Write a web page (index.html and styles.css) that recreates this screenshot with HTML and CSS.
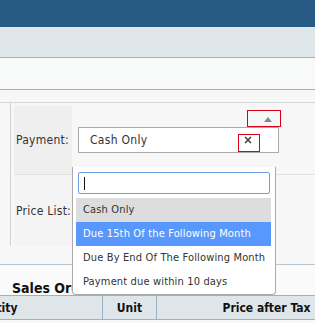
FILE: index.html
```html
<!DOCTYPE html>
<html lang="en">
<head>
    <meta charset="UTF-8">
    <title>Sales Order</title>
    <link rel="stylesheet" href="styles.css">
</head>
<body>
    <div class="topbar"></div>
    <div class="subbar"></div>
    <div class="toolbar"></div>
    <div class="gap"></div>

    <div class="form">
        <div class="form-row row-payment">
            <div class="label">Payment:</div>
            <div class="field">
                <div class="select">
                    <span class="select-text">Cash Only</span>
                    <span class="select-clear">
                        <svg width="8" height="8" viewBox="0 0 8 8">
                            <path d="M1 1 L7 7 M7 1 L1 7" stroke="#444" stroke-width="1.6" fill="none"/>
                        </svg>
                    </span>
                </div>
            </div>
        </div>
        <div class="form-row row-price">
            <div class="label">Price List:</div>
            <div class="field"></div>
        </div>
    </div>

    <div class="lines">
        <h2><span>Sales Order Lines</span></h2>
        <div class="table-wrap">
            <table>
                <thead>
                    <tr>
                        <th class="col-qty">Quantity</th>
                        <th class="col-unit">Unit</th>
                        <th class="col-price">Price after Tax</th>
                    </tr>
                </thead>
            </table>
        </div>
    </div>

    <!-- annotation boxes -->
    <div class="mark mark-arrow"><span class="arrow-up"></span></div>
    <div class="mark mark-clear"></div>

    <!-- open dropdown -->
    <div class="dropdown">
        <div class="search"><span class="caret"></span></div>
        <ul class="options">
            <li class="selected">Cash Only</li>
            <li class="active">Due 15th Of the Following Month</li>
            <li>Due By End Of The Following Month</li>
            <li>Payment due within 10 days</li>
        </ul>
    </div>
</body>
</html>
```

FILE: styles.css
```css
body {
    margin: 0;
    background: #f7f7f7;
    font-family: 'DejaVu Sans Condensed', 'DejaVu Sans', sans-serif;
    color: #333;
    overflow: hidden;
}

.topbar {
    height: 27px;
    background: #285a86;
}

.subbar {
    height: 30px;
    background: #dfe6ea;
    border-bottom: 1px solid #9fb0bf;
}

.toolbar {
    height: 31px;
    background: #f8f9f9;
    border-bottom: 1px solid #a3b2bf;
}

.gap {
    height: 12px;
    border-bottom: 1px solid #d6d6d6;
}

.form {
    margin-left: 10px;
    border-left: 1px solid #d2d2d2;
    padding: 3px 0 0 3px;
    height: 140px;
}

.form-row {
    display: flex;
}

.row-payment {
    height: 68px;
    border-bottom: 1px solid #e2e2e2;
}

.row-price {
    height: 71px;
}

.label {
    width: 58px;
    flex-shrink: 0;
    display: flex;
    align-items: center;
    padding-left: 2px;
    box-sizing: border-box;
    font-size: 12px;
    letter-spacing: 0.25px;
    white-space: nowrap;
    background: #efefef;
}

.row-price .label {
    background: #f4f4f4;
}

.field {
    flex: 1;
    display: flex;
    align-items: center;
    padding-left: 6px;
}

.select {
    width: 201px;
    height: 26px;
    box-sizing: border-box;
    border: 1px solid #aaa;
    background: #fff;
    display: flex;
    align-items: center;
    padding-left: 11px;
    font-size: 12px;
}

.select-text {
    flex: 1;
    letter-spacing: 0.3px;
}

.select-clear {
    width: 22px;
    height: 16px;
    margin-right: 19px;
    display: flex;
    align-items: center;
    justify-content: center;
}

.lines {
    border-top: 1px solid #b9c5ce;
    margin-top: 18px;
    background: #fafafa;
}

.lines h2 {
    margin: 0;
    height: 30px;
    width: 72px;
    overflow: hidden;
    white-space: nowrap;
    box-sizing: border-box;
    padding: 16px 0 0 12px;
    font-size: 14px;
    line-height: 14px;
    font-weight: bold;
    color: #111;
}

.table-wrap {
    overflow: hidden;
}

table {
    border-collapse: collapse;
    margin-left: -120px;
}

thead th {
    background: #dfe6ea;
    border-top: 1px solid #9cb2c4;
    border-bottom: 1px solid #9cb2c4;
    border-right: 1px solid #9cb2c4;
    height: 23px;
    padding: 0;
    font-size: 12px;
    font-weight: bold;
    color: #111;
}

.col-qty {
    width: 222px;
}

.col-unit {
    width: 53px;
}

.col-price {
    width: 158px;
    text-align: right;
    padding-right: 4px;
    box-sizing: border-box;
    border-right: none;
}

.mark {
    position: absolute;
    border: 1px solid #d9001b;
    box-sizing: border-box;
}

.mark-arrow {
    left: 247px;
    top: 110px;
    width: 34px;
    height: 17px;
}

.arrow-up {
    position: absolute;
    left: 16px;
    top: 6px;
    border-left: 4px solid transparent;
    border-right: 4px solid transparent;
    border-bottom: 5px solid #888;
}

.mark-clear {
    left: 238px;
    top: 134px;
    width: 22px;
    height: 18px;
}

.dropdown {
    position: absolute;
    left: 72px;
    top: 167px;
    width: 204px;
    box-sizing: border-box;
    background: #fff;
    border: 1px solid #aaa;
    border-top: none;
    border-radius: 0 0 4px 4px;
    padding: 5px 4px 0 3px;
}

.search {
    height: 22px;
    margin: 0 1px 4px 2px;
    box-sizing: border-box;
    border: 1px solid #6e9fdd;
    border-radius: 2px;
    position: relative;
}

.caret {
    position: absolute;
    left: 5px;
    top: 4px;
    width: 1px;
    height: 13px;
    background: #111;
}

.options {
    list-style: none;
    margin: 0;
    padding: 0;
}

.options li {
    height: 24px;
    line-height: 24px;
    padding-left: 7px;
    font-size: 11px;
    letter-spacing: 0.15px;
    color: #333;
    white-space: nowrap;
}

.options li.selected {
    background: #ddd;
}

.options li.active {
    background: #5897fb;
    color: #fff;
}
```
